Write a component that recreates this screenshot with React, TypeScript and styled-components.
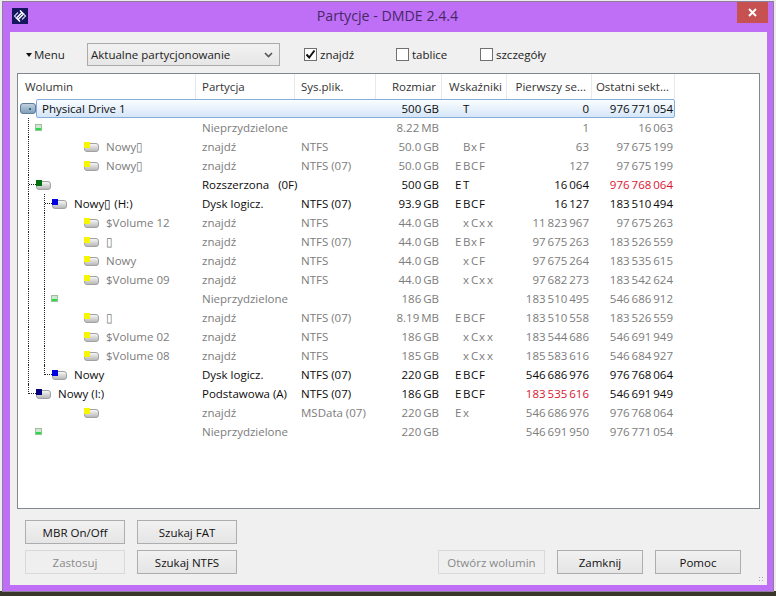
import styled, { createGlobalStyle } from 'styled-components'

const FONT = '"Open Sans", "Noto Sans", sans-serif'

type Kind = 'drive' | 'free' | 'found' | 'extended' | 'logical' | 'primary'
type Line = 'pass' | 'tee' | 'end' | null

interface RowData {
  kind: Kind
  indent: number
  name?: string
  part: string
  fs?: string
  size: string
  flags?: string
  first: string
  last: string
  active?: boolean
  redFirst?: boolean
  redLast?: boolean
  outer?: Line
  inner?: Line
}

const COLUMNS = [
  { title: 'Wolumin', align: 'left' },
  { title: 'Partycja', align: 'left' },
  { title: 'Sys.plik.', align: 'left' },
  { title: 'Rozmiar', align: 'right' },
  { title: 'Wskaźniki', align: 'center' },
  { title: 'Pierwszy se...', align: 'right' },
  { title: 'Ostatni sekt...', align: 'right' },
]

const ROWS: RowData[] = [
  { kind: 'drive', indent: 2, name: 'Physical Drive 1', part: '', size: '500 GB', flags: ' T', first: '0', last: '976 771 054', active: true },
  { kind: 'free', indent: 17, part: 'Nieprzydzielone', size: '8.22 MB', first: '1', last: '16 063', outer: 'pass' },
  { kind: 'found', indent: 66, name: 'Nowy▯', part: 'znajdź', fs: 'NTFS', size: '50.0 GB', flags: ' BxF', first: '63', last: '97 675 199', outer: 'pass' },
  { kind: 'found', indent: 66, name: 'Nowy▯', part: 'znajdź', fs: 'NTFS (07)', size: '50.0 GB', flags: 'EBCF', first: '127', last: '97 675 199', outer: 'pass' },
  { kind: 'extended', indent: 18, part: 'Rozszerzona   (0F)', size: '500 GB', flags: 'ET', first: '16 064', last: '976 768 064', active: true, redLast: true, outer: 'tee' },
  { kind: 'logical', indent: 34, name: 'Nowy▯ (H:)', part: 'Dysk logicz.', fs: 'NTFS (07)', size: '93.9 GB', flags: 'EBCF', first: '16 127', last: '183 510 494', active: true, outer: 'pass', inner: 'tee' },
  { kind: 'found', indent: 66, name: '$Volume 12', part: 'znajdź', fs: 'NTFS', size: '44.0 GB', flags: ' xCxx', first: '11 823 967', last: '97 675 263', outer: 'pass', inner: 'pass' },
  { kind: 'found', indent: 66, name: '▯', part: 'znajdź', fs: 'NTFS (07)', size: '44.0 GB', flags: 'EBxF', first: '97 675 263', last: '183 526 559', outer: 'pass', inner: 'pass' },
  { kind: 'found', indent: 66, name: 'Nowy', part: 'znajdź', fs: 'NTFS', size: '44.0 GB', flags: ' xCF', first: '97 675 264', last: '183 535 615', outer: 'pass', inner: 'pass' },
  { kind: 'found', indent: 66, name: '$Volume 09', part: 'znajdź', fs: 'NTFS', size: '44.0 GB', flags: ' xCxx', first: '97 682 273', last: '183 542 624', outer: 'pass', inner: 'pass' },
  { kind: 'free', indent: 33, part: 'Nieprzydzielone', size: '186 GB', first: '183 510 495', last: '546 686 912', outer: 'pass', inner: 'pass' },
  { kind: 'found', indent: 66, name: '▯', part: 'znajdź', fs: 'NTFS (07)', size: '8.19 MB', flags: 'EBCF', first: '183 510 558', last: '183 526 559', outer: 'pass', inner: 'pass' },
  { kind: 'found', indent: 66, name: '$Volume 02', part: 'znajdź', fs: 'NTFS', size: '186 GB', flags: ' xCxx', first: '183 544 686', last: '546 691 949', outer: 'pass', inner: 'pass' },
  { kind: 'found', indent: 66, name: '$Volume 08', part: 'znajdź', fs: 'NTFS', size: '185 GB', flags: ' xCxx', first: '185 583 616', last: '546 684 927', outer: 'pass', inner: 'pass' },
  { kind: 'logical', indent: 34, name: 'Nowy', part: 'Dysk logicz.', fs: 'NTFS (07)', size: '220 GB', flags: 'EBCF', first: '546 686 976', last: '976 768 064', active: true, outer: 'pass', inner: 'end' },
  { kind: 'primary', indent: 18, name: 'Nowy (I:)', part: 'Podstawowa (A)', fs: 'NTFS (07)', size: '186 GB', flags: 'EBCF', first: '183 535 616', last: '546 691 949', active: true, redFirst: true, outer: 'end' },
  { kind: 'found', indent: 66, part: 'znajdź', fs: 'MSData (07)', size: '220 GB', flags: 'Ex', first: '546 686 976', last: '976 768 064' },
  { kind: 'free', indent: 17, part: 'Nieprzydzielone', size: '220 GB', first: '546 691 950', last: '976 771 054' },
]

const SQUARE_COLORS: Record<string, string> = {
  found: '#f6f600',
  extended: '#007010',
  logical: '#0000e0',
  primary: '#000080',
}

function AppLogo() {
  return (
    <svg width="16" height="16" viewBox="0 0 16 16">
      <rect width="16" height="16" fill="#16165e" />
      <path d="M8 2.5 L11.5 6 L6.5 11 M8 13.5 L4.5 10 L9.5 5" fill="none" stroke="#fff" strokeWidth="1.5" />
      <path d="M11.5 6 L13.5 8 L10 11.5 M4.5 10 L2.5 8 L6 4.5" fill="none" stroke="#c9d2ee" strokeWidth="1.2" />
    </svg>
  )
}

function CheckMark() {
  return (
    <svg width="11" height="11" viewBox="0 0 11 11">
      <path d="M1.5 5.5 L4.2 8.5 L9.5 1.5" fill="none" stroke="#111" strokeWidth="2" />
    </svg>
  )
}

function TreeIcon({ kind }: { kind: Kind }) {
  if (kind === 'drive') {
    return (
      <svg width="16" height="11" viewBox="0 0 16 11">
        <defs>
          <linearGradient id="driveFill" x1="0" y1="0" x2="0" y2="1">
            <stop offset="0" stopColor="#c3d3e3" />
            <stop offset="1" stopColor="#7f9cb8" />
          </linearGradient>
        </defs>
        <rect x="0.5" y="0.5" width="15" height="10" rx="2.5" fill="url(#driveFill)" stroke="#5f7c99" />
        <rect x="9" y="5" width="2" height="2" fill="#2f6f6f" />
      </svg>
    )
  }
  if (kind === 'free') {
    return (
      <svg width="7" height="7" viewBox="0 0 7 7">
        <rect x="0" y="0" width="7" height="7" fill="#cfe6cf" />
        <rect x="0" y="4" width="7" height="3" fill="#22dd44" />
        <rect x="0.5" y="0.5" width="6" height="6" fill="none" stroke="#9fc09f" />
      </svg>
    )
  }
  return (
    <svg width="15" height="10" viewBox="0 0 15 10">
      <defs>
        <linearGradient id="diskFill" x1="0" y1="0" x2="0" y2="1">
          <stop offset="0" stopColor="#fafafa" />
          <stop offset="1" stopColor="#b4b4b4" />
        </linearGradient>
      </defs>
      <rect x="0.5" y="1.5" width="14" height="8" rx="2.5" fill="url(#diskFill)" stroke="#a2a2a2" />
      <rect x="0" y="0" width="6" height="6" fill={SQUARE_COLORS[kind]} />
    </svg>
  )
}

function Guides({ line, left }: { line?: Line; left: number }) {
  if (!line) return null
  return (
    <>
      <GuideV $left={left} $half={line === 'end'} />
      {line !== 'pass' && <GuideH $left={left} />}
    </>
  )
}

function Flags({ value }: { value: string }) {
  return (
    <FlagsCell>
      {value.split('').map((ch, i) => (
        <FlagSlot key={i}>{ch === ' ' ? '' : ch}</FlagSlot>
      ))}
    </FlagsCell>
  )
}

function App() {
  return (
    <Page>
      <GlobalStyle />
      <Window>
        <TitleBar>
          <AppLogo />
          <Title>Partycje - DMDE 2.4.4</Title>
          <CloseButton>
            <svg width="9" height="9" viewBox="0 0 9 9">
              <path d="M1 1 L8 8 M8 1 L1 8" stroke="#fff" strokeWidth="2" />
            </svg>
          </CloseButton>
        </TitleBar>

        <Client>
          <Toolbar>
            <MenuButton>
              <MenuArrow />
              Menu
            </MenuButton>
            <SelectBox>
              Aktualne partycjonowanie
              <svg width="9" height="6" viewBox="0 0 9 6">
                <path d="M1 1 L4.5 4.5 L8 1" fill="none" stroke="#555" strokeWidth="1.6" />
              </svg>
            </SelectBox>
            <CheckLabel $width={92}>
              <CheckBox>
                <CheckMark />
              </CheckBox>
              znajdź
            </CheckLabel>
            <CheckLabel $width={84}>
              <CheckBox />
              tablice
            </CheckLabel>
            <CheckLabel $width={90}>
              <CheckBox />
              szczegóły
            </CheckLabel>
          </Toolbar>

          <ListView>
            <HeaderRow>
              {COLUMNS.map((col) => (
                <HeaderCell key={col.title} $align={col.align}>
                  {col.title}
                </HeaderCell>
              ))}
            </HeaderRow>
            {ROWS.map((row, i) => (
              <Row key={i} $active={!!row.active} $selected={i === 0}>
                <TreeCell $indent={row.indent}>
                  <Guides line={row.outer} left={10} />
                  <Guides line={row.inner} left={26} />
                  <TreeIcon kind={row.kind} />
                  {row.name && <NodeName $kind={row.kind}>{row.name}</NodeName>}
                </TreeCell>
                <TextCell>{row.part}</TextCell>
                <TextCell>{row.fs}</TextCell>
                <NumberCell $padding={3}>{row.size}</NumberCell>
                {row.flags ? <Flags value={row.flags} /> : <span />}
                <NumberCell $padding={3} $red={row.redFirst}>
                  {row.first}
                </NumberCell>
                <NumberCell $padding={2} $red={row.redLast}>
                  {row.last}
                </NumberCell>
              </Row>
            ))}
          </ListView>

          <Footer>
            <ButtonGrid>
              <DialogButton $width={100}>MBR On/Off</DialogButton>
              <DialogButton $width={100}>Szukaj FAT</DialogButton>
              <DialogButton $width={100} disabled>
                Zastosuj
              </DialogButton>
              <DialogButton $width={100}>Szukaj NTFS</DialogButton>
            </ButtonGrid>
            <ButtonRow>
              <DialogButton $width={107} disabled>
                Otwórz wolumin
              </DialogButton>
              <DialogButton $width={86}>Zamknij</DialogButton>
              <DialogButton $width={86}>Pomoc</DialogButton>
            </ButtonRow>
            <ResizeGrip />
          </Footer>
        </Client>
      </Window>
    </Page>
  )
}

export default App

const GlobalStyle = createGlobalStyle`
  html, body {
    margin: 0;
    padding: 0;
  }
  body {
    font-family: ${FONT};
    font-size: 11.5px;
    color: #111;
  }
`

const Page = styled.div`
  width: 776px;
  height: 596px;
  padding: 1px 2px 4px 2px;
  box-sizing: border-box;
  overflow: hidden;
  background: linear-gradient(to bottom, #ececec 0, #ececec 591px, #39362c 591px);
`

const Window = styled.div`
  height: 100%;
  box-sizing: border-box;
  display: flex;
  flex-direction: column;
  background: #bf6ff6;
  border: 1px solid #8d7c9c;
  padding: 0 6px 6px 7px;
`

const TitleBar = styled.div`
  height: 30px;
  flex: none;
  position: relative;
  display: flex;
  align-items: center;
  padding: 0 0 2px 2px;
  box-sizing: border-box;
`

const Title = styled.div`
  flex: 1;
  text-align: center;
  font-size: 14.2px;
  color: #472866;
  padding-right: 20px;
  padding-bottom: 1px;
`

const CloseButton = styled.div`
  position: absolute;
  top: 0;
  right: -1px;
  width: 31px;
  height: 21px;
  background: #c75050;
  display: flex;
  align-items: center;
  justify-content: center;
`

const Client = styled.div`
  flex: 1;
  display: flex;
  flex-direction: column;
  background: #f0f0f0;
  min-height: 0;
`

const Toolbar = styled.div`
  height: 41px;
  flex: none;
  display: flex;
  align-items: center;
  padding: 4px 0 0 16px;
  box-sizing: border-box;
`

const MenuButton = styled.div`
  width: 61px;
  display: flex;
  align-items: center;
  gap: 2px;
  color: #222;
`

const MenuArrow = styled.span`
  width: 0;
  height: 0;
  border-left: 3.5px solid transparent;
  border-right: 3.5px solid transparent;
  border-top: 4px solid #111;
`

const SelectBox = styled.div`
  width: 193px;
  height: 23px;
  box-sizing: border-box;
  margin-right: 24px;
  padding: 0 6px 0 3px;
  display: flex;
  align-items: center;
  justify-content: space-between;
  border: 1px solid #ababab;
  background: linear-gradient(to bottom, #f2f2f2, #e6e6e6);
  color: #222;
`

const CheckLabel = styled.label<{ $width: number }>`
  width: ${({ $width }) => $width}px;
  display: flex;
  align-items: center;
  gap: 3px;
  color: #222;
`

const CheckBox = styled.span`
  width: 11px;
  height: 11px;
  border: 1px solid #707070;
  background: #fff;
  display: flex;
  align-items: center;
  justify-content: center;
`

const ListView = styled.div`
  flex: none;
  height: 436px;
  box-sizing: border-box;
  margin: 0 7px;
  border: 1px solid #82878f;
  background: #fff;
`

const GRID_COLUMNS = '178px 99px 81px 66px 65px 85px 83px'

const HeaderRow = styled.div`
  display: grid;
  grid-template-columns: ${GRID_COLUMNS};
  height: 25px;
`

const HeaderCell = styled.div<{ $align: string }>`
  display: flex;
  align-items: center;
  justify-content: ${({ $align }) =>
    $align === 'right' ? 'flex-end' : $align === 'center' ? 'center' : 'flex-start'};
  padding-left: ${({ $align }) => ($align === 'left' ? '6px' : $align === 'center' ? '3px' : '0')};
  padding-right: ${({ $align }) => ($align === 'right' ? '5px' : '0')};
  border-right: 1px solid #e6e8ec;
  box-sizing: border-box;
  color: #333;
  white-space: nowrap;

  &:first-child {
    padding-left: 7px;
  }
`

const Row = styled.div<{ $active: boolean; $selected: boolean }>`
  display: grid;
  grid-template-columns: ${GRID_COLUMNS};
  height: 19px;
  width: 657px;
  position: relative;
  color: ${({ $active }) => ($active ? '#0c0c0c' : '#7c7c7c')};
  ${({ $selected }) =>
    $selected &&
    `
    &::before {
      content: '';
      position: absolute;
      left: 18px;
      right: 0;
      top: 0;
      bottom: 0;
      border: 1px solid #84acdd;
      border-radius: 2px;
      background: linear-gradient(to bottom, #fafdff, #d5e6f8);
    }
  `}
  & > * {
    position: relative;
  }
`

const TreeCell = styled.div<{ $indent: number }>`
  display: flex;
  align-items: center;
  padding-left: ${({ $indent }) => $indent}px;
`

const GuideV = styled.span<{ $left: number; $half: boolean }>`
  position: absolute;
  left: ${({ $left }) => $left}px;
  top: 0;
  height: ${({ $half }) => ($half ? '10px' : '19px')};
  border-left: 1px dotted #222;
`

const GuideH = styled.span<{ $left: number }>`
  position: absolute;
  left: ${({ $left }) => $left + 1}px;
  top: 9px;
  width: 7px;
  border-top: 1px dotted #222;
`

const NodeName = styled.span<{ $kind: Kind }>`
  margin-left: ${({ $kind }) => ($kind === 'drive' ? 6 : 7)}px;
  white-space: nowrap;
`

const TextCell = styled.div`
  display: flex;
  align-items: center;
  padding-left: 6px;
  white-space: pre;
`

const NumberCell = styled.div<{ $padding: number; $red?: boolean }>`
  display: flex;
  align-items: center;
  justify-content: flex-end;
  padding-right: ${({ $padding }) => $padding}px;
  white-space: nowrap;
  word-spacing: -1px;
  ${({ $red }) => $red && 'color: #dc1430;'}
`

const FlagsCell = styled.div`
  display: flex;
  align-items: center;
  padding-left: 13px;
`

const FlagSlot = styled.span`
  width: 8px;
  flex: none;
`

const Footer = styled.div`
  flex: 1;
  position: relative;
  display: flex;
  align-items: flex-end;
  justify-content: space-between;
  padding: 0 26px 11px 15px;
`

const ButtonGrid = styled.div`
  display: grid;
  grid-template-columns: auto auto;
  column-gap: 12px;
  row-gap: 6px;
`

const ButtonRow = styled.div`
  display: flex;
  gap: 12px;
`

const DialogButton = styled.button<{ $width: number }>`
  width: ${({ $width }) => $width}px;
  height: 24px;
  padding: 0;
  box-sizing: border-box;
  font-family: ${FONT};
  font-size: 11.5px;
  color: #111;
  border: 1px solid #adadad;
  background: linear-gradient(to bottom, #f1f1f1, #e5e5e5);

  &:disabled {
    color: #8a8a8a;
    border-color: #d9d9d9;
    background: #efefef;
  }
`

const ResizeGrip = styled.span`
  position: absolute;
  right: 2px;
  bottom: 2px;
  width: 7px;
  height: 7px;
  background-image: radial-gradient(circle, #a8a8a8 1px, transparent 1px);
  background-size: 3px 3px;
`
